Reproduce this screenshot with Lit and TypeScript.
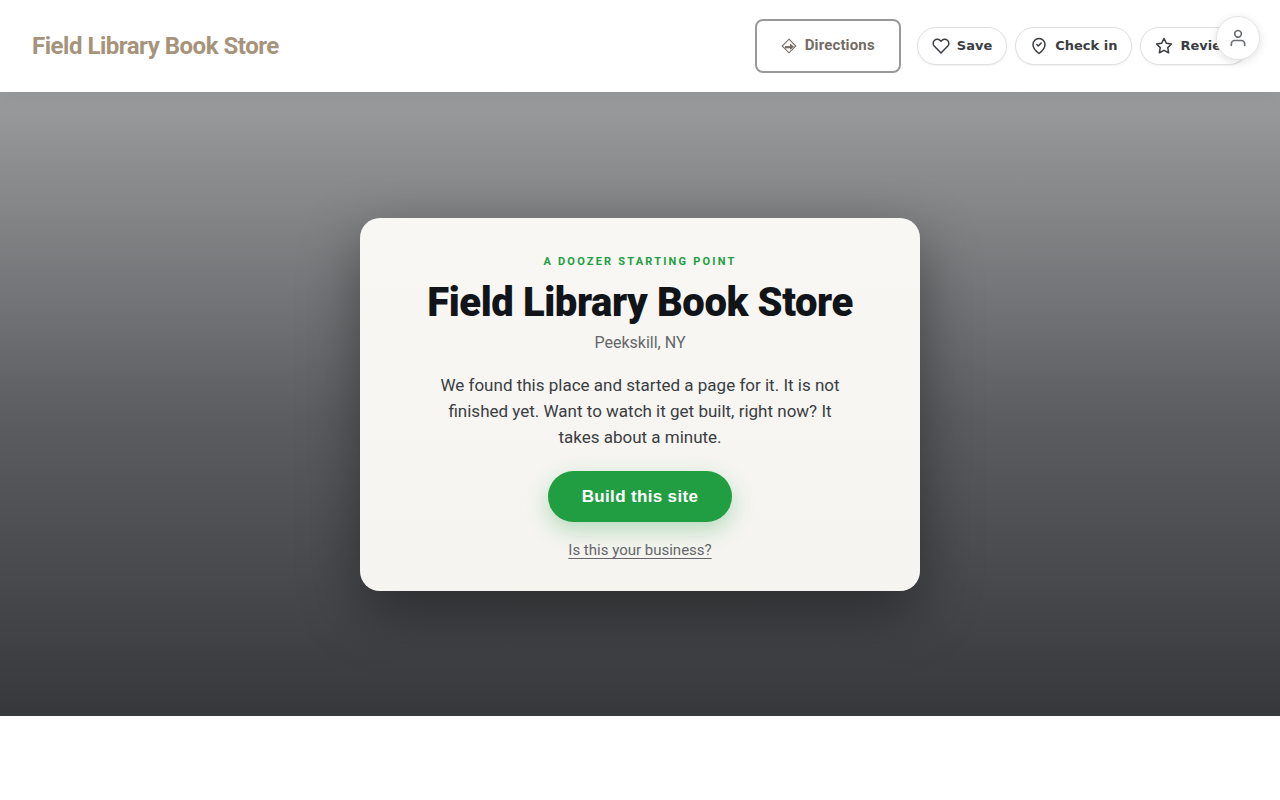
import { LitElement, html, css, svg } from "lit";
import { customElement } from "lit/decorators.js";

const heart = svg`<path d="M20.84 4.61a5.5 5.5 0 0 0-7.78 0L12 5.67l-1.06-1.06a5.5 5.5 0 0 0-7.78 7.78l1.06 1.06L12 21.23l7.78-7.78 1.06-1.06a5.5 5.5 0 0 0 0-7.78z"/>`;
const pinCheck = svg`<path d="M20 10c0 6-8 12-8 12s-8-6-8-12a8 8 0 0 1 16 0z"/><path d="m9 10 2 2 4-4"/>`;
const star = svg`<path d="M12 2l3.09 6.26L22 9.27l-5 4.87 1.18 6.88L12 17.77l-6.18 3.25L7 14.14 2 9.27l6.91-1.01L12 2z"/>`;
const person = svg`<path d="M20 21v-2a4 4 0 0 0-4-4H8a4 4 0 0 0-4 4v2"/><circle cx="12" cy="7" r="4"/>`;

@customElement("app-root")
export class AppRoot extends LitElement {
  static styles = css`
    :host {
      display: block;
      min-height: 100vh;
      background: #fff;
      font-family: Roboto, "Liberation Sans", sans-serif;
      color: #3a3d42;
    }
    * { box-sizing: border-box; }
    .header {
      position: relative;
      display: flex;
      align-items: center;
      justify-content: space-between;
      gap: 16px;
      padding: 19px 32px;
      background: #fff;
      box-shadow: 0 2px 20px rgba(0, 0, 0, 0.08);
    }
    .brand {
      font-size: 24px;
      line-height: 32px;
      font-weight: 700;
      letter-spacing: -0.02em;
      color: #a6937b;
      text-decoration: none;
      white-space: nowrap;
    }
    .actions { display: flex; align-items: center; gap: 16px; }
    .directions {
      display: flex;
      align-items: center;
      gap: 8px;
      padding: 12px 24px 14px;
      border: 2px solid #999;
      border-radius: 8px;
      color: #746c64;
      font-size: 15px;
      line-height: 24px;
      font-weight: 700;
      letter-spacing: 0.01em;
      text-decoration: none;
    }
    .sign { width: 16px; height: 16px; margin-top: 2px; }
    .pills { display: flex; gap: 8px; }
    .pill {
      display: flex;
      align-items: center;
      gap: 7px;
      padding: 9px 14px;
      border: 1px solid #dfe0e2;
      border-radius: 999px;
      background: #fff;
      box-shadow: 0 1px 2px rgba(0, 0, 0, 0.06);
      color: #3a3d42;
      font: 700 13px/18px "DejaVu Sans", sans-serif;
      white-space: nowrap;
    }
    .icon {
      fill: none;
      stroke: currentColor;
      stroke-width: 2;
      stroke-linecap: round;
      stroke-linejoin: round;
    }
    .account {
      position: fixed;
      top: 16px;
      right: 20px;
      display: grid;
      place-items: center;
      width: 44px;
      height: 44px;
      padding: 0;
      border: 1px solid #e4e5e7;
      border-radius: 50%;
      background: #fff;
      box-shadow: 0 2px 8px rgba(0, 0, 0, 0.12);
      color: #6b6e73;
    }
    .hero {
      display: grid;
      place-items: center;
      min-height: 78vh;
      padding: 32px;
      background: linear-gradient(180deg, #9b9c9d 0%, #5b5d61 52%, #36383b 100%);
    }
    .card {
      width: 100%;
      max-width: 560px;
      margin-top: 1px;
      padding: 36px 40px 29px;
      border-radius: 20px;
      background: linear-gradient(180deg, #f8f7f3, #f5f4f0);
      box-shadow: 0 20px 60px rgba(0, 0, 0, 0.4);
      text-align: center;
    }
    .eyebrow {
      margin: 0;
      font-size: 11px;
      line-height: 16px;
      font-weight: 700;
      letter-spacing: 0.2em;
      text-transform: uppercase;
      color: #219e41;
    }
    .title {
      margin: 10px 0 0;
      font-size: 40px;
      line-height: 46px;
      font-weight: 900;
      letter-spacing: -0.01em;
      color: #111418;
    }
    .place {
      margin: 5px 0 0;
      font-size: 16px;
      line-height: 24px;
      color: #64666b;
    }
    .lead {
      max-width: 416px;
      margin: 17px auto 0;
      font-size: 17px;
      line-height: 26px;
    }
    .build {
      margin-top: 21px;
      padding: 15px 34px;
      border: 0;
      border-radius: 999px;
      background: #219e41;
      box-shadow: 0 8px 22px rgba(33, 158, 65, 0.3);
      color: #fff;
      font: 700 17px/21px "Liberation Sans", sans-serif;
      letter-spacing: 0.02em;
    }
    .owner { margin: 16px 0 0; font-size: 15px; line-height: 24px; }
    .owner-link { color: #64666b; text-underline-offset: 3px; }
  `;

  private icon(shape: unknown, size: number) {
    return html`<svg class="icon" width=${size} height=${size} viewBox="0 0 24 24" aria-hidden="true">${shape}</svg>`;
  }

  render() {
    return html`
      <header class="header">
        <a class="brand" href="#">Field Library Book Store</a>
        <nav class="actions" aria-label="Place actions">
          <a class="directions" href="#directions">
            <svg class="sign" viewBox="0 0 16 16" fill="none" stroke="currentColor" aria-hidden="true">
              <path d="M8 1.2 14.8 8 8 14.8 1.2 8Z" stroke-width="1.1" />
              <path d="M4 9.2H11" stroke-width="2.2" />
              <path d="M9 5.4 13 8.8 9 11.8Z" fill="currentColor" stroke="none" />
            </svg>
            Directions
          </a>
          <div class="pills">
            <button class="pill" type="button">${this.icon(heart, 18)}Save</button>
            <button class="pill" type="button">${this.icon(pinCheck, 18)}Check in</button>
            <button class="pill" type="button">${this.icon(star, 18)}Review</button>
          </div>
        </nav>
      </header>
      <button class="account" type="button" aria-label="Account">${this.icon(person, 20)}</button>
      <main class="hero">
        <section class="card">
          <p class="eyebrow">A Doozer starting point</p>
          <h1 class="title">Field Library Book Store</h1>
          <p class="place">Peekskill, NY</p>
          <p class="lead">We found this place and started a page for it. It is not finished yet. Want to watch it get built, right now? It takes about a minute.</p>
          <button class="build" type="button">Build this site</button>
          <p class="owner"><a class="owner-link" href="#claim">Is this your business?</a></p>
        </section>
      </main>
    `;
  }
}
